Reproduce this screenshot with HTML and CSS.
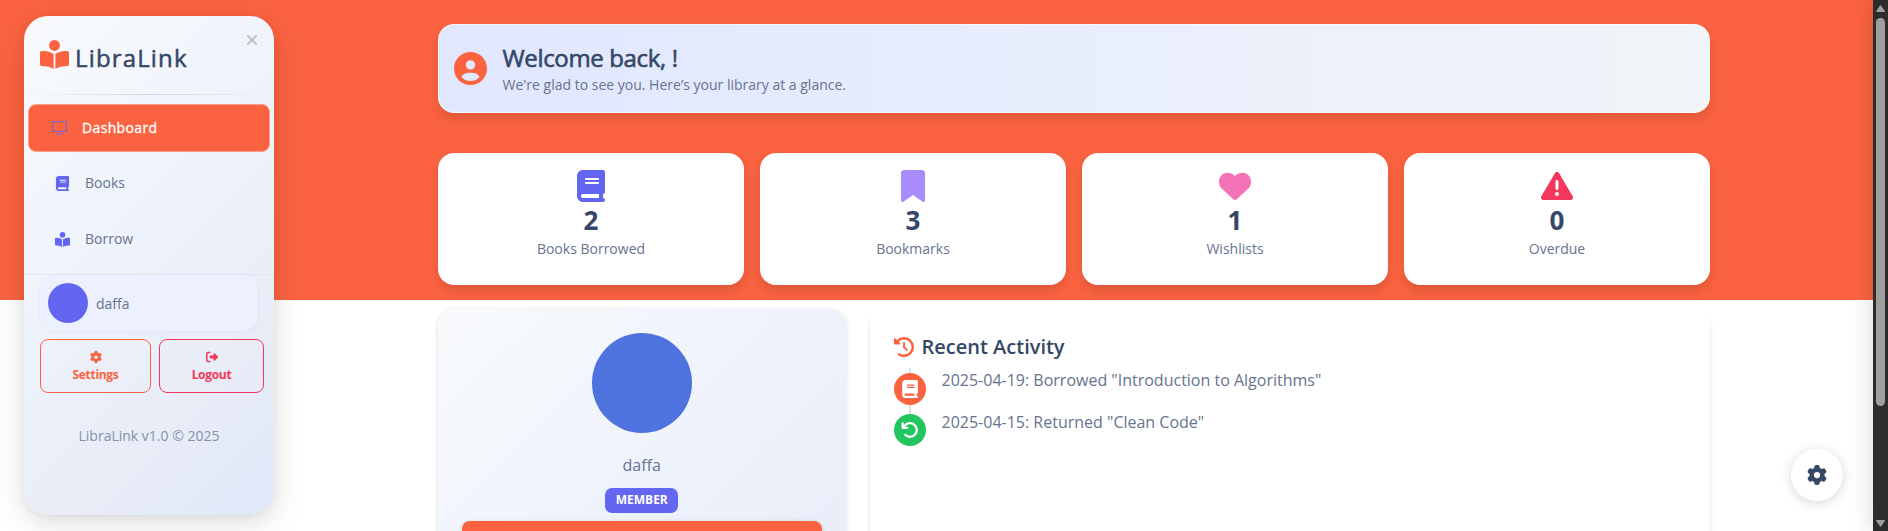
FILE: index.html
```html
<!DOCTYPE html>
<html lang="en">
<head>
<meta charset="utf-8">
<title>LibraLink</title>
<link rel="stylesheet" href="styles.css">
</head>
<body>
<svg class="defs" aria-hidden="true">
  <symbol id="reader" viewBox="0 0 512 512"><path d="M160 96a96 96 0 1 1 192 0A96 96 0 1 1 160 96zm80 152V512l-48.400-24.200c-20.900-10.400-43.500-17-66.800-19.300l-96-9.600C12.500 457.200 0 443.500 0 427V224c0-17.700 14.300-32 32-32H62.300c63.600 0 125.600 19.600 177.700 56zm32 264V248c52.100-36.400 114.100-56 177.700-56H480c17.700 0 32 14.300 32 32V427c0 16.400-12.500 30.200-28.800 31.800l-96 9.600c-23.200 2.300-45.900 8.900-66.800 19.300L272 512z"/></symbol>
  <symbol id="book" viewBox="0 0 448 512"><path d="M96 0C43 0 0 43 0 96V416c0 53 43 96 96 96H384h32c17.700 0 32-14.300 32-32s-14.300-32-32-32V384c17.700 0 32-14.300 32-32V32c0-17.700-14.300-32-32-32H384 96zm0 384H352v64H96c-17.700 0-32-14.300-32-32s14.300-32 32-32zm32-240c0-8.800 7.200-16 16-16H336c8.800 0 16 7.200 16 16s-7.200 16-16 16H144c-8.800 0-16-7.200-16-16zm16 48H336c8.800 0 16 7.200 16 16s-7.200 16-16 16H144c-8.800 0-16-7.200-16-16s7.200-16 16-16z"/></symbol>
  <symbol id="bookmark" viewBox="0 0 384 512"><path d="M0 48V487.700C0 501.100 10.900 512 24.300 512c5 0 9.900-1.500 14-4.400L192 400 345.700 507.600c4.100 2.900 9 4.400 14 4.400c13.400 0 24.300-10.900 24.300-24.300V48c0-26.500-21.500-48-48-48H48C21.500 0 0 21.500 0 48z"/></symbol>
  <symbol id="heart" viewBox="0 0 512 512"><path d="M47.600 300.400L228.300 469.100c7.500 7 17.400 10.900 27.700 10.900s20.200-3.900 27.700-10.900L464.400 300.400c30.400-28.300 47.600-68 47.600-109.500v-5.800c0-69.900-50.500-129.500-119.400-141C347 36.500 300.600 51.400 268 84L256 96 244 84c-32.600-32.600-79-47.500-124.600-39.900C50.500 55.600 0 115.200 0 185.100v5.800c0 41.500 17.200 81.200 47.600 109.500z"/></symbol>
  <symbol id="warning" viewBox="0 0 512 512"><path d="M256 32c14.200 0 27.300 7.500 34.500 19.800l216 368c7.300 12.400 7.300 27.700 .2 40.100S486.300 480 472 480H40c-14.300 0-27.600-7.700-34.700-20.100s-7-27.800 .2-40.100l216-368C228.700 39.500 241.800 32 256 32zm0 128c-13.300 0-24 10.700-24 24V296c0 13.300 10.700 24 24 24s24-10.700 24-24V184c0-13.300-10.700-24-24-24zm32 224a32 32 0 1 0 -64 0 32 32 0 1 0 64 0z"/></symbol>
  <symbol id="gear" viewBox="0 0 512 512"><path d="M495.900 166.600c3.200 8.700 .5 18.400-6.400 24.600l-43.300 39.400c1.100 8.300 1.700 16.800 1.700 25.400s-.6 17.100-1.700 25.400l43.300 39.400c6.900 6.200 9.600 15.900 6.400 24.600c-4.400 11.900-9.700 23.300-15.800 34.300l-4.700 8.100c-6.600 11-14 21.400-22.100 31.200c-5.900 7.200-15.700 9.600-24.500 6.800l-55.700-17.700c-13.400 10.300-28.200 18.900-44 25.400l-12.500 57.100c-2 9.100-9 16.300-18.200 17.800c-13.800 2.300-28 3.500-42.500 3.500s-28.700-1.200-42.500-3.500c-9.200-1.500-16.200-8.700-18.200-17.800l-12.500-57.100c-15.800-6.500-30.600-15.100-44-25.400L83.100 425.900c-8.800 2.800-18.600 .3-24.500-6.800c-8.100-9.800-15.500-20.200-22.100-31.200l-4.700-8.100c-6.100-11-11.400-22.400-15.800-34.300c-3.200-8.700-.5-18.400 6.400-24.600l43.300-39.400C64.600 273.100 64 264.600 64 256s.6-17.100 1.700-25.400L22.400 191.200c-6.900-6.200-9.600-15.900-6.400-24.600c4.400-11.900 9.700-23.300 15.800-34.300l4.700-8.100c6.600-11 14-21.400 22.100-31.200c5.900-7.200 15.700-9.600 24.500-6.800l55.700 17.700c13.400-10.300 28.200-18.900 44-25.400l12.500-57.100c2-9.100 9-16.300 18.200-17.800C227.300 1.200 241.500 0 256 0s28.700 1.200 42.500 3.500c9.200 1.500 16.200 8.700 18.200 17.800l12.500 57.100c15.800 6.500 30.600 15.100 44 25.400l55.700-17.700c8.800-2.800 18.600-.3 24.500 6.800c8.100 9.800 15.500 20.200 22.100 31.200l4.700 8.100c6.100 11 11.400 22.400 15.800 34.300zM256 336a80 80 0 1 0 0-160 80 80 0 1 0 0 160z"/></symbol>
  <symbol id="logout" viewBox="0 0 512 512"><path d="M377.900 105.900L500.700 228.700c7.200 7.200 11.300 17.100 11.300 27.300s-4.100 20.100-11.300 27.300L377.900 406.100c-6.400 6.400-15 9.900-24 9.900c-18.700 0-33.900-15.200-33.900-33.900l0-62.100-128 0c-17.700 0-32-14.300-32-32l0-64c0-17.700 14.300-32 32-32l128 0 0-62.100c0-18.700 15.200-33.900 33.900-33.900c9 0 17.600 3.600 24 9.900zM160 96L96 96c-17.700 0-32 14.300-32 32l0 256c0 17.700 14.300 32 32 32l64 0c17.700 0 32 14.300 32 32s-14.300 32-32 32l-64 0c-53 0-96-43-96-96L0 128C0 75 43 32 96 32l64 0c17.700 0 32 14.300 32 32s-14.300 32-32 32z"/></symbol>
  <symbol id="account" viewBox="2 2 20 20"><path d="M12 2C6.480 2 2 6.480 2 12s4.480 10 10 10 10-4.480 10-10S17.520 2 12 2zm0 5a2.800 2.800 0 1 1 0 5.600 2.800 2.800 0 0 1 0-5.600zm0 12.500c-2.300 0-4.300-.9-5.400-2.400.3-1.700 2.700-2.600 5.400-2.600s5.100.9 5.400 2.600c-1.100 1.500-3.100 2.400-5.400 2.400z"/></symbol>
  <symbol id="history" viewBox="0 0 512 512"><path d="M75 75L41 41C25.900 25.900 0 36.600 0 57.900V168c0 13.300 10.700 24 24 24H134.100c21.400 0 32.100-25.900 17-41l-30.800-30.800C155 85.500 203 64 256 64c106 0 192 86 192 192s-86 192-192 192c-40.800 0-78.600-12.700-109.700-34.400c-14.500-10.100-34.400-6.600-44.600 7.900s-6.600 34.400 7.900 44.600C151.200 495 201.700 512 256 512c141.400 0 256-114.600 256-256S397.400 0 256 0C185.300 0 121.300 28.700 75 75zm181 53c-13.300 0-24 10.700-24 24V256c0 6.400 2.500 12.500 7 17l72 72c9.400 9.400 24.600 9.400 33.900 0s9.400-24.600 0-33.900l-65-65V152c0-13.300-10.700-24-24-24z"/></symbol>
  <symbol id="undo" viewBox="0 0 512 512"><path d="M125.700 160H176c17.700 0 32 14.300 32 32s-14.300 32-32 32H48c-17.700 0-32-14.300-32-32V64c0-17.700 14.300-32 32-32s32 14.300 32 32v51.200L97.600 97.600c87.500-87.500 229.300-87.500 316.800 0s87.500 229.300 0 316.800s-229.300 87.500-316.800 0c-12.500-12.500-12.500-32.800 0-45.300s32.800-12.500 45.300 0c62.500 62.500 163.800 62.500 226.300 0s62.500-163.800 0-226.300s-163.800-62.500-226.300 0L125.700 160z"/></symbol>
</svg>
<div class="page">
  <aside class="sidebar">
    <div class="brand">
      <svg class="brand-icon"><use href="#reader"/></svg>
      <span class="brand-name">LibraLink</span>
      <svg class="close" viewBox="0 0 12 12"><path d="M2 2l8 8M10 2l-8 8"/></svg>
    </div>
    <div class="rule"></div>
    <nav class="nav">
      <a class="nav-item active"><svg class="nav-icon tv" viewBox="0 0 15 14"><path d="M.6 .6h13.800v9.800H.6z"/><path d="M4.200 13h6.600"/></svg><span class="nav-label">Dashboard</span></a>
      <a class="nav-item"><svg class="nav-icon"><use href="#book"/></svg><span class="nav-label">Books</span></a>
      <a class="nav-item"><svg class="nav-icon"><use href="#reader"/></svg><span class="nav-label">Borrow</span></a>
    </nav>
    <div class="account">
      <div class="user"><span class="user-avatar"></span>daffa</div>
      <div class="actions">
        <button class="btn settings"><svg class="btn-icon"><use href="#gear"/></svg>Settings</button>
        <button class="btn logout"><svg class="btn-icon"><use href="#logout"/></svg>Logout</button>
      </div>
      <div class="version">LibraLink v1.0 © 2025</div>
    </div>
  </aside>
  <main class="main">
    <header class="welcome">
      <svg class="welcome-icon"><use href="#account"/></svg>
      <div class="welcome-copy">
        <h1 class="welcome-title">Welcome back, !</h1>
        <p class="welcome-text">We're glad to see you. Here’s your library at a glance.</p>
      </div>
    </header>
    <section class="stats">
      <div class="stat"><svg class="stat-icon indigo"><use href="#book"/></svg><b class="stat-value">2</b><span>Books Borrowed</span></div>
      <div class="stat"><svg class="stat-icon violet"><use href="#bookmark"/></svg><b class="stat-value">3</b><span>Bookmarks</span></div>
      <div class="stat"><svg class="stat-icon pink"><use href="#heart"/></svg><b class="stat-value">1</b><span>Wishlists</span></div>
      <div class="stat"><svg class="stat-icon red"><use href="#warning"/></svg><b class="stat-value">0</b><span>Overdue</span></div>
    </section>
    <section class="panels">
      <div class="profile">
        <span class="profile-avatar"></span>
        <span class="profile-name">daffa</span>
        <span class="badge">MEMBER</span>
        <span class="profile-action"></span>
      </div>
      <div class="activity">
        <h2 class="activity-title"><svg class="activity-icon"><use href="#history"/></svg>Recent Activity</h2>
        <ul class="timeline">
          <li class="event"><span class="event-dot borrowed"><svg><use href="#book"/></svg></span>2025-04-19: Borrowed "Introduction to Algorithms"</li>
          <li class="event"><span class="event-dot returned"><svg><use href="#undo"/></svg></span>2025-04-15: Returned "Clean Code"</li>
        </ul>
      </div>
    </section>
  </main>
  <div class="fab"><svg class="fab-icon"><use href="#gear"/></svg></div>
  <div class="drawer-edge"></div>
  <div class="scrollbar">
    <svg class="arrow" viewBox="0 0 9 7"><path d="M4.500 0L9 6.200 8.400 7H.6L0 6.200z"/></svg>
    <span class="thumb"></span>
    <svg class="arrow down" viewBox="0 0 9 7"><path d="M4.500 7L9 .8 8.400 0H.6L0 .8z"/></svg>
  </div>
</div>
</body>
</html>
```
FILE: styles.css
```css
* { box-sizing: border-box; }
body {
  margin: 0;
  font: 400 14px/21px "Open Sans", sans-serif;
  color: #67748e;
}
h1, h2, p, ul { margin: 0; padding: 0; }
svg { display: block; fill: currentColor; }
.defs { position: absolute; width: 0; height: 0; }
.page {
  position: relative;
  display: flex;
  height: 531px;
  overflow: hidden;
  background: linear-gradient(#fb6340 300px, #fff 300px);
}

/* Sidebar */
.sidebar {
  flex: none;
  width: 250px;
  height: 499px;
  margin: 16px 0 0 24px;
  border-radius: 24px;
  background: linear-gradient(135deg, #f8fafc 0%, #eef2fb 45%, #e8ecf7 75%, #e0e7f8 100%);
  box-shadow: 0 8px 32px rgba(0, 0, 0, .13), 0 2px 8px rgba(0, 0, 0, .06);
}
.brand {
  display: flex;
  align-items: flex-start;
  height: 78px;
  padding: 24px 16px 0;
}
.brand-icon { width: 29px; height: 29px; color: #fb6340; }
.brand-name {
  flex: 1;
  margin-left: 6px;
  font-size: 24px;
  line-height: 36px;
  letter-spacing: 1.15px;
  color: #344767;
  -webkit-text-stroke: .5px;
}
.close {
  width: 12px;
  height: 12px;
  margin: -6px 0 0;
  stroke: #bcc4d2;
  stroke-width: 2.2;
  stroke-linecap: round;
}
.rule { height: 1px; background: linear-gradient(90deg, transparent, rgba(0, 0, 0, .13), transparent); }
.nav { padding: 9px 4px 0; }
.nav-item {
  display: flex;
  align-items: center;
  height: 48px;
  margin-bottom: 8px;
  padding-left: 27px;
  gap: 15px;
}
.nav-item.active {
  margin-bottom: 7px;
  padding-left: 23px;
  border: 1px solid #fca08a;
  border-radius: 8px;
  background: #fb6340;
  color: #fff;
  letter-spacing: .35px;
  -webkit-text-stroke: .3px;
}
.nav-label { padding-bottom: 2px; }
.nav-icon { width: 15px; height: 15px; color: #6366f1; }
.tv { height: 14px; fill: none; stroke: #8064bd; stroke-width: 1.2; }
.account { margin-top: 11px; padding: 0 16px; border-top: 1px solid #e3e5ea; }
.user {
  display: flex;
  align-items: center;
  width: 218px;
  height: 56px;
  padding: 0 8px;
  gap: 8px;
  border-radius: 16px;
  background: #edf1ff;
  box-shadow: 0 1px 4px rgba(0, 0, 0, .05);
}
.user-avatar { width: 40px; height: 40px; border-radius: 50%; background: #6366f1; }
.actions { display: flex; gap: 8px; margin: 8px -6px 0 0; }
.btn {
  display: flex;
  flex-direction: column;
  align-items: center;
  height: 54px;
  width: 111px;
  padding: 11px 0 0;
  border: 1px solid;
  border-radius: 8px;
  background: none;
  font: 700 12px/18px "Open Sans", sans-serif;
  letter-spacing: -.3px;
}
.btn-icon { width: 12px; height: 12px; margin-bottom: 3px; }
.settings { color: #fb6340; }
.logout { width: 105px; color: #f5365c; }
.version { margin-top: 32px; text-align: center; color: #8392ab; }

/* Main column */
.main { flex: none; width: 1272px; margin: 24px 0 0 164px; }
.welcome {
  display: flex;
  align-items: center;
  height: 89px;
  padding: 0 15px;
  gap: 15.5px;
  border: 1px solid rgba(255, 255, 255, .6);
  border-radius: 16px;
  background: linear-gradient(90deg, #e0e7ff, #f1f5f9);
  box-shadow: 0 6px 12px rgba(0, 0, 0, .12);
}
.welcome-icon { width: 33px; height: 33px; color: #fb6340; }
.welcome-copy { padding-bottom: 2px; }
.welcome-title {
  font-size: 24px;
  font-weight: 400;
  line-height: 33px;
  letter-spacing: -.35px;
  color: #344767;
  -webkit-text-stroke: .6px;
}
.stats { display: grid; grid-template-columns: repeat(4, 1fr); gap: 16px; margin-top: 40px; }
.stat {
  display: flex;
  flex-direction: column;
  align-items: center;
  height: 132px;
  padding-top: 17px;
  border-radius: 16px;
  background: #fff;
  box-shadow: 0 6px 12px rgba(0, 0, 0, .12);
}
.stat-icon { width: 32px; height: 32px; }
.indigo { color: #6366f1; }
.violet { color: #a78bfa; }
.pink { color: #f472b6; }
.red { color: #f5365c; }
.stat-value { font-size: 26px; line-height: 36px; color: #344767; }

.panels { display: flex; gap: 24px; margin: 24px 0 0 -.5px; }
.profile {
  display: flex;
  flex-direction: column;
  align-items: center;
  width: 408.5px;
  height: 560px;
  padding: 24px 24px 0;
  border-radius: 16px;
  background: linear-gradient(135deg, #f8fafc 0%, #eef2fb 40%, #e0e7f7 100%);
  box-shadow: 0 1px 5px rgba(0, 0, 0, .14);
}
.profile-avatar { width: 100px; height: 100px; border-radius: 50%; background: #4e73df; }
.profile-name { margin-top: 20px; font-size: 16px; line-height: 24px; }
.badge {
  width: 73px;
  height: 25px;
  margin-top: 11px;
  border-radius: 7px;
  background: #6366f1;
  color: #fff;
  font-size: 12px;
  font-weight: 700;
  line-height: 24px;
  text-align: center;
}
.profile-action {
  align-self: stretch;
  height: 40px;
  margin-top: 8px;
  border-radius: 8px;
  background: #fb6340;
  box-shadow: 0 1px 4px rgba(0, 0, 0, .16);
}
.activity {
  flex: 1;
  height: 560px;
  padding: 24px;
  border-radius: 16px;
  background: #fff;
  box-shadow: 0 4px 4px rgba(0, 0, 0, .13);
}
.activity-title {
  display: flex;
  align-items: center;
  gap: 7.5px;
  height: 27px;
  font-size: 20px;
  font-weight: 600;
  line-height: 27px;
  color: #344767;
}
.activity-icon { width: 20px; height: 20px; color: #fb6340; }
.timeline {
  margin-top: 8px;
  list-style: none;
  background: linear-gradient(#dee2e6, #dee2e6) 15px 0 / 2px 55px no-repeat;
}
.event {
  display: flex;
  gap: 15.5px;
  height: 42px;
  font-size: 16px;
  line-height: 24px;
}
.event-dot {
  display: grid;
  place-items: center;
  width: 32px;
  height: 32px;
  margin-top: 5px;
  border-radius: 50%;
  color: #fff;
}
.event-dot svg { width: 18px; height: 18px; }
.borrowed { background: #fb6340; }
.returned { margin-top: 4px; background: #22c55e; }

/* Floating settings button and window chrome */
.fab {
  position: absolute;
  right: 45px;
  bottom: 30px;
  display: grid;
  place-items: center;
  width: 52px;
  height: 52px;
  border-radius: 50%;
  background: #fff;
  box-shadow: 0 2px 12px rgba(0, 0, 0, .16);
}
.fab-icon { width: 20px; height: 20px; color: #344767; }
.drawer-edge {
  position: absolute;
  top: 0;
  right: -25px;
  width: 40px;
  height: 531px;
  box-shadow: 0 0 24px rgba(0, 0, 0, .16);
}
.scrollbar {
  position: relative;
  display: flex;
  flex-direction: column;
  align-items: center;
  width: 15px;
  height: 531px;
  margin-left: auto;
  padding: 5px 0 4px;
  background: #2c2c2c;
}
.arrow { width: 9px; height: 7px; fill: #9f9f9f; }
.down { margin-top: auto; }
.thumb { width: 9px; height: 388px; margin-top: 6px; border-radius: 5px; background: #9f9f9f; }
```
